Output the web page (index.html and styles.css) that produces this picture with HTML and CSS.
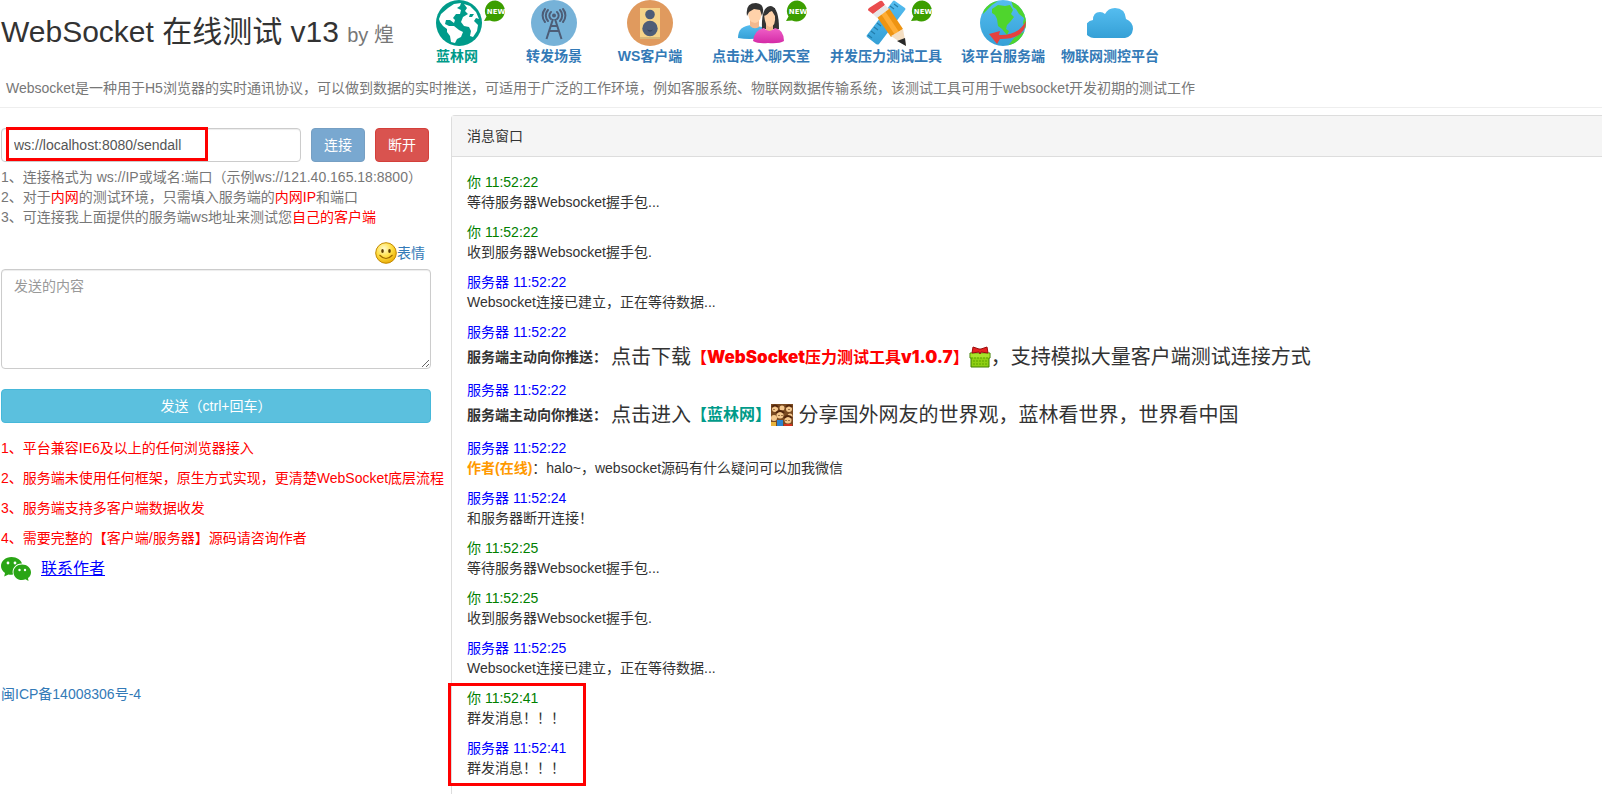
FILE: index.html
```html
<!DOCTYPE html>
<html lang="zh-CN">
<head>
<meta charset="utf-8">
<title>WebSocket 在线测试</title>
<link rel="stylesheet" href="styles.css">
</head>
<body>
<svg class="defs" aria-hidden="true">
  <defs>
    <linearGradient id="blue" x1="0" y1="0" x2="0" y2="1"><stop offset="0" stop-color="#55bdf0"/><stop offset="1" stop-color="#35a0d6"/></linearGradient>
    <linearGradient id="pink" x1="0" y1="0" x2="0" y2="1"><stop offset="0" stop-color="#f060c8"/><stop offset="1" stop-color="#d42ba6"/></linearGradient>
    <radialGradient id="smile" cx=".4" cy=".3" r=".75"><stop offset="0" stop-color="#fffbd0"/><stop offset=".5" stop-color="#ffdf45"/><stop offset="1" stop-color="#e8a800"/></radialGradient>
    <clipPath id="disc"><circle cx="23" cy="23" r="23"/></clipPath>
    <symbol id="new" viewBox="0 0 22 22">
      <path fill="#3c9e00" d="M11.500 0.500A10.500 10.500 0 1 1 6 20.500L0 21L2.500 16.500A10.500 10.500 0 0 1 11.500 0.500Z"/>
      <text class="badge-text" x="12" y="14" text-anchor="middle">NEW</text>
    </symbol>
  </defs>
</svg>

<header class="header">
  <div class="top">
    <h1 class="title">WebSocket 在线测试 v13 <small>by 煌</small></h1>
    <nav class="nav">
      <a class="nav-item nav-first" href="#">
        <span class="icon">
          <svg width="46" height="46" viewBox="0 0 46 46"><circle cx="23" cy="23" r="23" fill="#009b8a"/><g fill="#fff"><path d="M3 19L5 14L12 8L18 4L25 3L24 6L21 8L25 10L24 14L20 14L17 18L19 20L18 23L14 20L10 20L9 24L13 26L18 26L23 30L27 32L25 37L21 39L19 43L15 42L14 36L11 32L11 29L7 26L4 22Z"/><path d="M28 4L34 6L40 12L43 19L40 18L38 21L42 25L41 31L37 37L34 36L35 31L33 27L28 26L25 22L27 17L32 14L29 11L31 8Z"/></g><path d="M34 14L38 14L36 17L33 17Z" fill="#009b8a"/></svg>
          <svg class="badge" width="22" height="22"><use href="#new"/></svg>
        </span>
        <span>蓝林网</span>
      </a>
      <a class="nav-item" href="#">
        <span class="icon"><svg width="46" height="46" viewBox="0 0 46 46"><circle cx="23" cy="23" r="23" fill="#76b2d8"/><g fill="none" stroke="#4d5d77" stroke-width="2"><path d="M22 19L15.500 39M24 19L30.500 39M20 26H26M18 31H28"/><path stroke-linecap="round" d="M20 19A4.500 4.500 0 0 1 20 12M26 12A4.500 4.500 0 0 1 26 19M17 21A8 8 0 0 1 17 10M29 10A8 8 0 0 1 29 21M14 22A10 10 0 0 1 14 9M32 9A10 10 0 0 1 32 22"/></g><circle cx="23" cy="15.500" r="2" fill="#4d5d77"/></svg></span>
        <span>转发场景</span>
      </a>
      <a class="nav-item" href="#">
        <span class="icon"><svg width="46" height="46" viewBox="0 0 46 46"><circle cx="23" cy="23" r="23" fill="#e09a5e"/><path d="M13 8H33V39H13Z" fill="#f5d388"/><path d="M13 37H33V39H13Z" fill="#d8b777"/><circle cx="23" cy="14.500" r="4.800" fill="#4d5d77"/><circle cx="23" cy="28.500" r="7.700" fill="#4d5d77"/><path d="M20 29.500Q23 34 26 29.500Q23 31 20 29.500Z" fill="#394760"/></svg></span>
        <span>WS客户端</span>
      </a>
      <a class="nav-item" href="#">
        <span class="icon">
          <svg width="46" height="46" viewBox="0 0 46 46"><path d="M0 38C0 29 5 26 13 25L24 27V38Q11 40 0 38Z" fill="url(#blue)"/><path d="M12 20H21V27Q16 30 12 26Z" fill="#f3b98f"/><path d="M10 11Q10 23 17 23Q24 22 24 10L18 6Z" fill="#ffd2aa"/><path d="M9 16Q7 3 18 3Q28 4 24 16L22 10L16 9L11 12Z" fill="#333"/><path d="M24 29Q23 6 33 6Q41 8 41 29Z" fill="#343434"/><path d="M28 23H35V31H28Z" fill="#f3b98f"/><path d="M26 14Q27 27 32 27Q38 26 37 16L34 11Z" fill="#ffd2aa"/><path d="M25 16Q30 16 33 9L38 16L37 8L30 7Z" fill="#343434"/><path d="M15 41Q16 30 26 28Q31 34 37 28Q46 30 46 41Q41 44 30 43Q20 44 15 41Z" fill="url(#pink)"/></svg>
          <svg class="badge" width="22" height="22"><use href="#new"/></svg>
        </span>
        <span>点击进入聊天室</span>
      </a>
      <a class="nav-item" href="#">
        <span class="icon">
          <svg width="46" height="46" viewBox="0 0 46 46"><path d="M30 1Q31 0 32 1L42 8Q43 9 42 10L16 44Q15 45 13 44L4 37Q3 36 4 35Z" fill="url(#blue)"/><path stroke="#237eac" stroke-width="1.200" d="M27 6L31 9M31 4L35 7M24 10L28 13M5 35L9 38M8 31L12 34M11 27L15 30M14 23L18 26M20 14L24 17" fill="none"/><path d="M14 17L26 8L40 29L28 37Z" fill="#ee9412"/><path d="M18 14L22 11L36 32L32 35Z" fill="#ffad35"/><path d="M6 8L17 1Q19 0 20 2L22 5L10 14L6 11Q4 10 6 8Z" fill="#ea4d4e"/><path d="M10 14L22 5L26 9L14 18Z" fill="#e6e6e6"/><path d="M28 36L40 29L43 46Z" fill="#f4dec2"/><path d="M34 41L42 38L43 46Z" fill="#292929"/></svg>
          <svg class="badge" width="22" height="22"><use href="#new"/></svg>
        </span>
        <span>并发压力测试工具</span>
      </a>
      <a class="nav-item" href="#">
        <span class="icon"><svg width="46" height="46" viewBox="0 0 46 46"><g clip-path="url(#disc)"><path d="M0 0H46V46H0Z" fill="url(#blue)"/><g fill="#4fd52d"><path d="M12 9L18 5L25 6L30 5L33 10L31 14L34 17L30 22L27 25L26 29L29 31L27 35L22 29L18 26L17 19L15 15L12 13Z"/><path d="M4 8L12 2L18 1L12 5L8 9L3 14ZM31 0L40 6L46 16V31L43 23L44 18L39 14L36 9L33 7ZM46 31L38 42L28 46L34 38L40 34Z"/></g></g><path d="M46 21Q46 39 20 39L17 44L9 34L20 31L19 35Q38 36 46 21Z" fill="#e5413e"/></svg></span>
        <span>该平台服务端</span>
      </a>
      <a class="nav-item" href="#">
        <span class="icon"><svg width="46" height="46" viewBox="0 0 46 46"><path d="M8 38A9 9 0 0 1 6 20Q6 12 13 12Q16 12 18 14Q21 8 28 8Q38 8 39 19Q46 22 46 29Q45 37 38 38Z" fill="url(#blue)"/></svg></span>
        <span>物联网测控平台</span>
      </a>
    </nav>
  </div>
  <p class="intro">Websocket是一种用于H5浏览器的实时通讯协议，可以做到数据的实时推送，可适用于广泛的工作环境，例如客服系统、物联网数据传输系统，该测试工具可用于websocket开发初期的测试工作</p>
</header>

<main class="main">
  <section class="side">
    <div class="connect">
      <div class="address">
        <input class="control" type="text" value="ws://localhost:8080/sendall" aria-label="服务地址">
        <span class="mark mark-address"></span>
      </div>
      <button class="btn btn-primary" type="button" disabled>连接</button>
      <button class="btn btn-danger" type="button">断开</button>
    </div>
    <p class="help">1、连接格式为 ws://IP或域名:端口（示例ws://121.40.165.18:8800）<br>2、对于<span class="red">内网</span>的测试环境，只需填入服务端的<span class="red">内网IP</span>和端口<br>3、可连接我上面提供的服务端ws地址来测试您<span class="red">自己的客户端</span></p>
    <div class="tools">
      <a class="emoji" href="#"><svg width="22" height="22" viewBox="0 0 22 22"><circle cx="11" cy="11" r="10.300" fill="url(#smile)" stroke="#c48a00"/><ellipse cx="7.500" cy="9" rx="1.300" ry="2" fill="#5d3b00"/><ellipse cx="14.500" cy="9" rx="1.300" ry="2" fill="#5d3b00"/><path d="M4.500 13Q11 20 17.500 13" fill="none" stroke="#a06a00" stroke-width="1.200"/></svg>表情</a>
    </div>
    <textarea class="control message" placeholder="发送的内容" aria-label="发送的内容"></textarea>
    <button class="btn btn-info" type="button">发送（ctrl+回车）</button>
    <div class="notes">
      <p>1、平台兼容IE6及以上的任何浏览器接入</p>
      <p>2、服务端未使用任何框架，原生方式实现，更清楚WebSocket底层流程</p>
      <p>3、服务端支持多客户端数据收发</p>
      <p>4、需要完整的【客户端/服务器】源码请咨询作者</p>
    </div>
    <div class="contact">
      <svg width="30" height="24" viewBox="0 0 30 24"><path fill="#2aa515" d="M10.500 0C4.500 0 0 4 0 9Q0 13 4 16L3.200 19.500L7.500 17.500Q10 18 12 17.500C10 11 16 6 21 6.500C20 3 16 0 10.500 0Z"/><path fill="#2aa515" d="M21 7.500C16 7.500 12.500 11 12.500 15.200C12.500 19.500 16 23 21 23Q23 23 24.500 22.300L27.500 24L27 21Q30 19 30 15.200C30 11 26 7.500 21 7.500Z"/><g fill="#fff"><circle cx="7" cy="6" r="1.400"/><circle cx="14" cy="6" r="1.400"/><circle cx="18.500" cy="13" r="1.200"/><circle cx="24" cy="13" r="1.200"/></g></svg>
      <a class="contact-link" href="#">联系作者</a>
    </div>
    <a class="icp" href="#">闽ICP备14008306号-4</a>
  </section>

  <section class="panel">
    <h2 class="panel-heading">消息窗口</h2>
    <div class="log">
      <p><span class="me">你 11:52:22</span><br>等待服务器Websocket握手包...</p>
      <p><span class="me">你 11:52:22</span><br>收到服务器Websocket握手包.</p>
      <p><span class="server">服务器 11:52:22</span><br>Websocket连接已建立，正在等待数据...</p>
      <div class="push"><span class="server">服务器 11:52:22</span>
        <p class="push-line"><b class="push-label">服务端主动向你推送： </b>点击下载<b class="download">【<span class="latin">WebSocket</span>压力测试工具<span class="latin">v1.0.7</span>】</b><svg width="22" height="22" viewBox="0 0 22 22"><path d="M1 7H21V12H20V21H2V12H1Z" fill="#8fcf14" stroke="#3f7f00"/><path d="M1.500 7.500H20.500V11.500H1.500Z" fill="#a9e22c"/><path d="M2 12H20M4 15H18M4 18H18" stroke="#5ea300" stroke-dasharray="2 1"/><path d="M4 1L10 3H12L18 1L19 7L12 6L11 8L10 6L3 7Z" fill="#e62222" stroke="#9c0b0b"/></svg>，支持模拟大量客户端测试连接方式</p>
      </div>
      <div class="push"><span class="server">服务器 11:52:22</span>
        <p class="push-line"><b class="push-label">服务端主动向你推送： </b>点击进入<b class="teal">【蓝林网】</b><svg width="22" height="22" viewBox="0 0 22 22"><path d="M0 0H22V22H0Z" fill="#7a4a21"/><g fill="#f5c88e"><circle cx="4" cy="5" r="3"/><circle cx="11" cy="4" r="2.500"/><circle cx="18" cy="5" r="3"/><circle cx="3" cy="14" r="3"/><circle cx="19" cy="12" r="2.500"/><circle cx="9" cy="11" r="3.500"/><circle cx="17" cy="16" r="3.500"/></g><path d="M1 3Q4 0 7 3M15 3Q18 0 21 3M5 9Q9 5 13 9M13 14Q17 10 21 14" stroke="#54270c" stroke-width="2" fill="none"/><path d="M0 18H5V22H0Z" fill="#e9b43c"/><path d="M6 16H12V22H6Z" fill="#2d83cf"/><path d="M13 20H21V22H13Z" fill="#d4311f"/><path d="M8 11V12M11 11V12M15 16V17M18 16V17M3 5V6M18 5V6" stroke="#492000"/></svg> 分享国外网友的世界观，蓝林看世界，世界看中国</p>
      </div>
      <p><span class="server">服务器 11:52:22</span><br><b class="author">作者(在线)</b>：halo~，websocket源码有什么疑问可以加我微信</p>
      <p><span class="server">服务器 11:52:24</span><br>和服务器断开连接！</p>
      <p><span class="me">你 11:52:25</span><br>等待服务器Websocket握手包...</p>
      <p><span class="me">你 11:52:25</span><br>收到服务器Websocket握手包.</p>
      <p><span class="server">服务器 11:52:25</span><br>Websocket连接已建立，正在等待数据...</p>
      <div class="latest">
        <p><span class="me">你 11:52:41</span><br>群发消息！！！</p>
        <p><span class="server">服务器 11:52:41</span><br>群发消息！！！</p>
        <span class="mark mark-latest"></span>
      </div>
    </div>
  </section>
</main>
</body>
</html>
```
FILE: styles.css
```css
* { box-sizing: border-box; }
body {
  margin: 0;
  min-height: 100vh;
  display: flex;
  flex-direction: column;
  font: 14px/20px "Liberation Sans", "Noto Sans CJK SC", sans-serif;
  color: #333;
  background: #fff;
}
p, h1, h2 { margin: 0; font-weight: normal; }
a { color: #337ab7; text-decoration: none; }
button, input, textarea { font: inherit; }
svg { display: block; flex: none; }
.defs { position: absolute; width: 0; height: 0; }

.header { border-bottom: 1px solid #eee; padding-bottom: 9px; }
.top { display: grid; grid-template-columns: 435px 1fr; align-items: center; padding-left: 1px; }
.title { font-size: 30px; line-height: 34px; white-space: nowrap; }
.title small { font-size: 20px; color: #777; }
.nav { display: grid; grid-template-columns: 73px 90px 102px 120px 130px 104px 110px; font-weight: bold; }
.nav-item { display: flex; flex-direction: column; align-items: center; white-space: nowrap; }
.nav-first { align-items: flex-start; color: #009b8a; }
.icon { position: relative; }
.badge { position: absolute; left: 48px; top: 0; }
.badge-text { font: bold 7px "DejaVu Sans", sans-serif; fill: #fff; }
.intro { margin-top: 12px; padding-left: 6px; color: #777; }

.main { flex: 1; display: grid; grid-template-columns: minmax(0, 430px) minmax(0, 1fr); gap: 20px; padding: 7px 0 0 1px; }
.side { padding-top: 13px; }
.connect { display: flex; gap: 10px; }
.address { position: relative; flex: 1; }
.control {
  display: block;
  width: 100%;
  height: 34px;
  padding: 6px 12px;
  border: 1px solid #ccc;
  border-radius: 4px;
  color: #555;
  background: #fff;
  box-shadow: inset 0 1px 1px rgba(0, 0, 0, .075);
}
.control::placeholder { color: #999; }
.message { height: 100px; resize: vertical; }
.btn { height: 34px; padding: 0 12px; border: 1px solid; border-radius: 4px; color: #fff; white-space: nowrap; }
.btn-primary { background: #337ab7; border-color: #2e6da4; opacity: .65; }
.btn-danger { background: #d9534f; border-color: #d43f3a; margin-right: 2px; }
.btn-info { display: block; width: 100%; margin-top: 20px; background: #5bc0de; border-color: #46b8da; }
.help { margin-top: 5px; color: #777; white-space: nowrap; }
.red { color: #f00; }
.tools { display: flex; justify-content: flex-end; margin: 15px 6px 5px 0; }
.emoji { display: flex; align-items: center; }
.notes { display: grid; gap: 10px; margin-top: 15px; color: #f00; white-space: nowrap; }
.contact { display: flex; align-items: center; gap: 10px; margin-top: 9px; }
.contact-link { font-size: 16px; color: #00f; text-decoration: underline; }
.icp { display: inline-block; margin-top: 103px; }

.panel { border: 1px solid #ddd; border-width: 1px 0 0 1px; border-radius: 4px 0 0 0; }
.panel-heading { padding: 10px 15px; font-size: 14px; line-height: 20px; background: #f5f5f5; border-bottom: 1px solid #ddd; }
.log { display: grid; gap: 10px; padding: 15px; }
.me { color: #008000; }
.server { color: #00f; }
.push-line { display: flex; align-items: center; height: 28px; padding-top: 2px; font-size: 20px; white-space: pre; }
.push-label { font-size: 14px; }
.download { font-size: 16px; color: #f00; }
.latin { font-family: Inter, sans-serif; font-size: 17px; font-weight: 900; }
.teal { font-size: 16px; color: #009b8a; }
.author { color: #f90; }
.latest { position: relative; display: grid; gap: 10px; }
.mark { position: absolute; border: 3px solid #f00; pointer-events: none; }
.mark-address { left: 5px; top: -1px; width: 202px; height: 34px; }
.mark-latest { left: -19px; top: -5px; bottom: -8px; width: 138px; }
```
